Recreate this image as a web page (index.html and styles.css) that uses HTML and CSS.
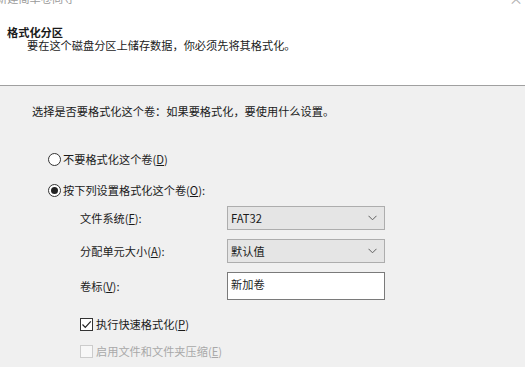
FILE: index.html
```html
<!DOCTYPE html>
<html lang="zh-CN">

<head>
    <meta charset="UTF-8">
    <title>新建简单卷向导</title>
    <link rel="stylesheet" href="styles.css">
</head>

<body>
    <div class="wizard">
        <!-- Header -->
        <div class="header">
            <div class="caption">
                <span>新建简单卷向导</span>
                <span class="close">×</span>
            </div>
            <div class="title">格式化分区</div>
            <div class="subtitle">要在这个磁盘分区上储存数据，你必须先将其格式化。</div>
        </div>

        <!-- Content -->
        <div class="content">
            <p class="intro">选择是否要格式化这个卷：如果要格式化，要使用什么设置。</p>

            <div class="options">
                <label class="radio-row first">
                    <span class="radio"></span>
                    <span>不要格式化这个卷(<u>D</u>)</span>
                </label>
                <label class="radio-row second">
                    <span class="radio checked"></span>
                    <span>按下列设置格式化这个卷(<u>O</u>):</span>
                </label>

                <div class="fields">
                    <span class="field-label">文件系统(<u>F</u>):</span>
                    <div class="combo">
                        <span>FAT32</span>
                        <svg width="9" height="6" viewBox="0 0 9 6"><path d="M0.5 0.8 L4.5 4.8 L8.5 0.8" fill="none" stroke="#606060" stroke-width="1"/></svg>
                    </div>

                    <span class="field-label">分配单元大小(<u>A</u>):</span>
                    <div class="combo">
                        <span>默认值</span>
                        <svg width="9" height="6" viewBox="0 0 9 6"><path d="M0.5 0.8 L4.5 4.8 L8.5 0.8" fill="none" stroke="#606060" stroke-width="1"/></svg>
                    </div>

                    <span class="field-label">卷标(<u>V</u>):</span>
                    <div class="textbox">新加卷</div>
                </div>

                <label class="check-row quick">
                    <span class="checkbox">
                        <svg width="11" height="11" viewBox="0 0 11 11"><path d="M1.5 5.5 L4.3 8.3 L9.8 2.3" fill="none" stroke="#222" stroke-width="1.2"/></svg>
                    </span>
                    <span>执行快速格式化(<u>P</u>)</span>
                </label>
                <label class="check-row compress disabled">
                    <span class="checkbox"></span>
                    <span>启用文件和文件夹压缩(<u>E</u>)</span>
                </label>
            </div>
        </div>
    </div>
</body>

</html>
```

FILE: styles.css
```css
/* Reset */
* {
    margin: 0;
    padding: 0;
    box-sizing: border-box;
}

body {
    font-family: "Noto Sans CJK SC", "Noto Sans", sans-serif;
    font-size: 11.2px;
    color: #1a1a1a;
    background-color: #f0f0f0;
}

.wizard {
    width: 525px;
    height: 367px;
    overflow: hidden;
}

/* Header */
.header {
    display: flow-root;
    height: 86px;
    background-color: #fff;
    border-bottom: 1px solid #a0a0a0;
    padding-left: 7px;
}

.caption {
    display: flex;
    justify-content: space-between;
    margin-top: -9px;
    margin-left: -11px;
    padding-right: 2px;
    height: 14px;
    line-height: 14px;
    color: #9a9a9a;
}

.caption .close {
    font-size: 14px;
    color: #b0b0b0;
}

.title {
    margin-top: 21px;
    line-height: 12px;
    font-weight: bold;
}

.subtitle {
    padding-left: 20px;
    line-height: 14px;
}

/* Content */
.content {
    padding: 17px 0 0 32px;
}

.intro {
    line-height: 16px;
}

.options {
    padding-left: 16px;
}

.radio-row,
.check-row {
    display: flex;
    align-items: center;
    gap: 2px;
    height: 16px;
    line-height: 16px;
}

.radio-row.first {
    margin-top: 32px;
}

.radio-row.second {
    margin-top: 15px;
}

.radio {
    width: 13px;
    height: 13px;
    border: 1px solid #333;
    border-radius: 50%;
    background-color: #fff;
    display: flex;
    align-items: center;
    justify-content: center;
}

.radio.checked::after {
    content: "";
    width: 7px;
    height: 7px;
    border-radius: 50%;
    background-color: #222;
}

/* Format settings */
.fields {
    display: grid;
    grid-template-columns: 147px 158px;
    grid-template-rows: 24px 24px 28px;
    row-gap: 9px;
    align-items: center;
    margin-top: 8px;
    padding-left: 32px;
}

.combo {
    height: 24px;
    background-color: #e5e5e5;
    border: 1px solid #adadad;
    display: flex;
    align-items: center;
    justify-content: space-between;
    padding: 0 7px 0 3px;
}

.textbox {
    height: 28px;
    background-color: #fff;
    border: 1px solid #7a7a7a;
    padding: 3px 0 0 3px;
    line-height: 16px;
}

.check-row {
    padding-left: 32px;
    gap: 3px;
}

.check-row.quick {
    margin-top: 16px;
}

.check-row.compress {
    margin-top: 11px;
}

.checkbox {
    width: 13px;
    height: 13px;
    border: 1px solid #333;
    background-color: #fff;
    display: flex;
    align-items: center;
    justify-content: center;
}

.check-row.disabled {
    color: #a8a8a8;
}

.check-row.disabled .checkbox {
    border-color: #cccccc;
    background-color: #f7f7f7;
}
```
